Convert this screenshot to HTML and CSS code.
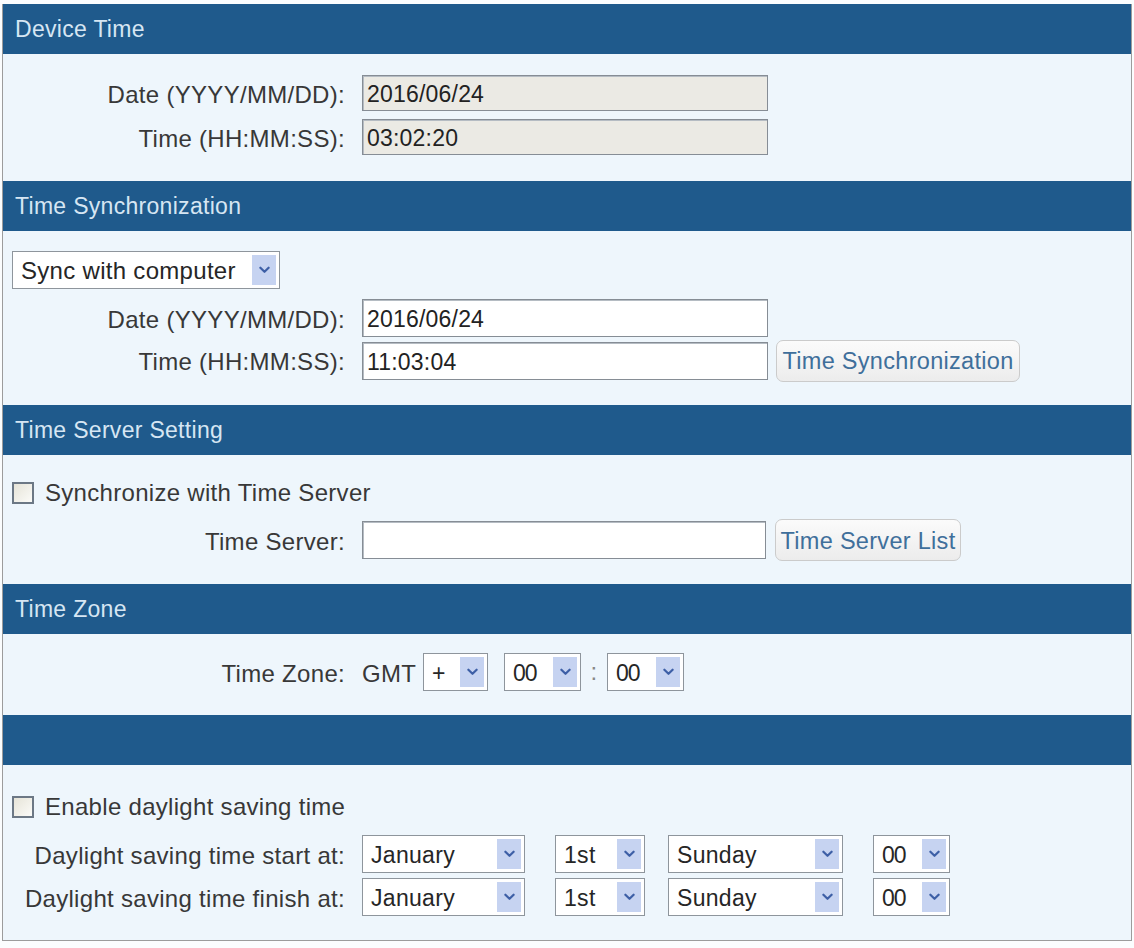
FILE: index.html
```html
<!DOCTYPE html>
<html lang="en">
<head>
	<meta charset="UTF-8">
	<title>Time Settings</title>
	<link rel="stylesheet" href="styles.css">
</head>
<body>

<div class="panel">

	<!-- device time -->
	<h2 class="bar">Device Time</h2>
	<div class="box box-device">
		<div class="row">
			<label class="lbl">Date (YYYY/MM/DD):</label>
			<input class="txt txt-ro" type="text" value="2016/06/24" readonly>
		</div>
		<div class="row">
			<label class="lbl">Time (HH:MM:SS):</label>
			<input class="txt txt-ro" type="text" value="03:02:20" readonly>
		</div>
	</div>

	<!-- sync -->
	<h2 class="bar">Time Synchronization</h2>
	<div class="box box-sync">
		<div class="sel sel-sync">
			<span class="sel-text">Sync with computer</span>
			<span class="sel-arrow"><svg viewBox="0 0 12 8"><path d="M1.5 1.5 L6 6 L10.5 1.5"/></svg></span>
		</div>
		<div class="row row-date2">
			<label class="lbl">Date (YYYY/MM/DD):</label>
			<input class="txt" type="text" value="2016/06/24">
		</div>
		<div class="row row-btn">
			<label class="lbl">Time (HH:MM:SS):</label>
			<input class="txt" type="text" value="11:03:04">
			<button class="btn btn-sync">Time Synchronization</button>
		</div>
	</div>

	<!-- server -->
	<h2 class="bar">Time Server Setting</h2>
	<div class="box box-server">
		<label class="check">
			<span class="check-box"></span>
			<span>Synchronize with Time Server</span>
		</label>
		<div class="row row-btn row-server">
			<label class="lbl">Time Server:</label>
			<input class="txt txt-server" type="text" value="">
			<button class="btn btn-list">Time Server List</button>
		</div>
	</div>

	<!-- zone -->
	<h2 class="bar">Time Zone</h2>
	<div class="box box-zone">
		<div class="row row-zone">
			<label class="lbl">Time Zone:</label>
			<div class="zone">
				<span class="gmt">GMT</span>
				<div class="sel sel-sign">
					<span class="sel-text">+</span>
					<span class="sel-arrow"><svg viewBox="0 0 12 8"><path d="M1.5 1.5 L6 6 L10.5 1.5"/></svg></span>
				</div>
				<div class="sel sel-num">
					<span class="sel-text">00</span>
					<span class="sel-arrow"><svg viewBox="0 0 12 8"><path d="M1.5 1.5 L6 6 L10.5 1.5"/></svg></span>
				</div>
				<span class="colon">:</span>
				<div class="sel sel-num">
					<span class="sel-text">00</span>
					<span class="sel-arrow"><svg viewBox="0 0 12 8"><path d="M1.5 1.5 L6 6 L10.5 1.5"/></svg></span>
				</div>
			</div>
		</div>
	</div>

	<!-- daylight saving -->
	<h2 class="bar"></h2>
	<div class="box box-dst">
		<label class="check">
			<span class="check-box"></span>
			<span>Enable daylight saving time</span>
		</label>
		<div class="row row-dst row-dst-first">
			<label class="lbl">Daylight saving time start at:</label>
			<div class="dst">
				<div class="sel sel-month"><span class="sel-text">January</span><span class="sel-arrow"><svg viewBox="0 0 12 8"><path d="M1.5 1.5 L6 6 L10.5 1.5"/></svg></span></div>
				<div class="sel sel-week"><span class="sel-text">1st</span><span class="sel-arrow"><svg viewBox="0 0 12 8"><path d="M1.5 1.5 L6 6 L10.5 1.5"/></svg></span></div>
				<div class="sel sel-day"><span class="sel-text">Sunday</span><span class="sel-arrow"><svg viewBox="0 0 12 8"><path d="M1.5 1.5 L6 6 L10.5 1.5"/></svg></span></div>
				<div class="sel sel-num"><span class="sel-text">00</span><span class="sel-arrow"><svg viewBox="0 0 12 8"><path d="M1.5 1.5 L6 6 L10.5 1.5"/></svg></span></div>
			</div>
		</div>
		<div class="row row-dst">
			<label class="lbl">Daylight saving time finish at:</label>
			<div class="dst">
				<div class="sel sel-month"><span class="sel-text">January</span><span class="sel-arrow"><svg viewBox="0 0 12 8"><path d="M1.5 1.5 L6 6 L10.5 1.5"/></svg></span></div>
				<div class="sel sel-week"><span class="sel-text">1st</span><span class="sel-arrow"><svg viewBox="0 0 12 8"><path d="M1.5 1.5 L6 6 L10.5 1.5"/></svg></span></div>
				<div class="sel sel-day"><span class="sel-text">Sunday</span><span class="sel-arrow"><svg viewBox="0 0 12 8"><path d="M1.5 1.5 L6 6 L10.5 1.5"/></svg></span></div>
				<div class="sel sel-num"><span class="sel-text">00</span><span class="sel-arrow"><svg viewBox="0 0 12 8"><path d="M1.5 1.5 L6 6 L10.5 1.5"/></svg></span></div>
			</div>
		</div>
	</div>

</div>

</body>
</html>
```

FILE: styles.css
```css
:root {
	--bar-bg: #1f5a8c;
	--bar-text: #d6e6f3;
	--box-bg: #eef6fc;
	--label-width: 342px;
	--label-gap: 17px;
}

* {
	box-sizing: border-box;
}

body {
	margin: 0;
	background-color: #fbfdfe;
	font-family: "Liberation Sans", Arial, sans-serif;
	color: #383838;
}

.panel {
	margin: 4px 2px 0 2px;
	border: 1px solid #9c9c9c;
	border-top: none;
	background-color: var(--box-bg);
}

.bar {
	margin: 0;
	height: 50px;
	line-height: 50px;
	padding-left: 12px;
	background-color: var(--bar-bg);
	color: var(--bar-text);
	font-size: 23px;
	font-weight: normal;
	letter-spacing: 0.3px;
}

.box {
	display: flex;
	flex-direction: column;
	padding-left: 9px;
	font-size: 24px;
	letter-spacing: 0.3px;
}

.box-device {
	padding-top: 21px;
	padding-bottom: 26px;
	gap: 8px;
}

.box-sync {
	padding-top: 20px;
	padding-bottom: 23px;
}

.box-server {
	padding-top: 24px;
	padding-bottom: 23px;
}

.box-zone {
	padding-top: 19px;
	padding-bottom: 24px;
}

.box-dst {
	padding-top: 28px;
	padding-bottom: 24px;
}

.row {
	display: flex;
	align-items: center;
	gap: var(--label-gap);
	margin-left: -9px;
}

.lbl {
	width: var(--label-width);
	text-align: right;
	flex-shrink: 0;
	padding-top: 3px;
}

.txt {
	width: 406px;
	height: 38px;
	padding: 3px 4px 0 4px;
	border: 1px solid #868d95;
	box-shadow: inset 1px 1px 0 #b5bcc3;
	background-color: #fff;
	font-family: "Liberation Sans", Arial, sans-serif;
	font-size: 23px;
	letter-spacing: 0.2px;
	color: #222;
	outline: none;
}

.box-device .txt {
	height: 36px;
}

.txt-ro {
	background-color: #ebeae4;
}

.txt-server {
	width: 404px;
}

.row-date2 {
	margin-top: 10px;
}

.row-btn {
	height: 43px;
	margin-top: 2px;
	gap: 0;
}

.row-btn .lbl {
	margin-right: var(--label-gap);
}

.row-server {
	height: 42px;
	margin-top: 12px;
}

.btn {
	height: 42px;
	margin-left: 8px;
	padding: 2px 0 0 0;
	border: 1px solid #cbcbcb;
	border-radius: 7px;
	background: linear-gradient(#fbfbfb, #ececec);
	color: #3f6f9b;
	font-family: "Liberation Sans", Arial, sans-serif;
	font-size: 23.5px;
	letter-spacing: 0.3px;
	white-space: nowrap;
	text-align: center;
}

.btn-sync {
	width: 244px;
}

.btn-list {
	width: 186px;
	margin-left: 9px;
}

/* fake selects */
.sel {
	display: flex;
	align-items: center;
	height: 38px;
	padding: 3px 3px 3px 8px;
	border: 1px solid #8e959c;
	background-color: #fff;
	color: #262626;
	font-size: 23px;
}

.sel-text {
	flex: 1;
	white-space: nowrap;
	padding-top: 2px;
}

.sel-arrow {
	width: 24px;
	height: 100%;
	background-color: #c6d3f1;
	display: flex;
	align-items: center;
	justify-content: center;
}

.sel-arrow svg {
	width: 11px;
	height: 8px;
	fill: none;
	stroke: #3d5fa6;
	stroke-width: 2.4;
	stroke-linecap: round;
	stroke-linejoin: round;
}

.sel-sync {
	width: 268px;
	font-size: 24px;
}

.sel-sign {
	width: 65px;
}

.sel-num {
	width: 77px;
	letter-spacing: -1px;
}

.sel-month {
	width: 163px;
}

.sel-week {
	width: 90px;
}

.sel-day {
	width: 175px;
}

.zone {
	display: flex;
	align-items: center;
}

.gmt {
	width: 61px;
	padding-top: 3px;
}

.sel-sign + .sel-num {
	margin-left: 16px;
}

.colon {
	width: 26px;
	text-align: center;
	color: #888;
}

/* checkboxes */
.check {
	display: flex;
	align-items: center;
	gap: 11px;
	height: 28px;
}

.check-box {
	width: 22px;
	height: 22px;
	border: 2px solid #6c7885;
	background: linear-gradient(135deg, #e6e4d8, #fbfbf8);
}

.row-dst {
	height: 38px;
	margin-top: 5px;
}

.row-dst-first {
	margin-top: 14px;
}

.dst {
	display: flex;
	align-items: center;
}

.dst .sel-week {
	margin-left: 30px;
}

.dst .sel-day {
	margin-left: 23px;
}

.dst .sel-num {
	margin-left: 30px;
}
```
